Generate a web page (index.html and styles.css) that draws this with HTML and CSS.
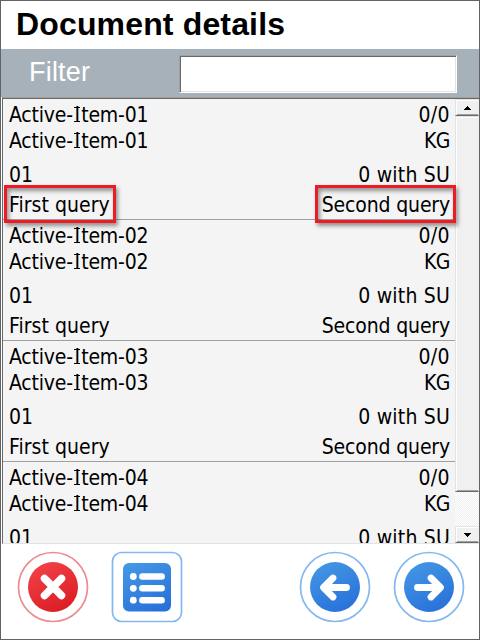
FILE: index.html
```html
<!DOCTYPE html>
<html lang="en">
<head>
<meta charset="utf-8">
<title>Document details</title>
<link rel="stylesheet" href="styles.css">
</head>
<body>
<main class="window">
  <h1 class="title">Document details</h1>
  <div class="filter">
    <label class="filter-label" for="filter">Filter</label>
    <input class="filter-input" id="filter" type="text">
  </div>
  <section class="list">
    <div class="rows">
      <article class="item">
        <div class="line"><span class="name">Active-<span class="cap-i">I</span>tem-01</span><span class="count">0/0</span></div>
        <div class="line"><span class="name">Active-<span class="cap-i">I</span>tem-01</span><span class="unit">KG</span></div>
        <div class="line stock"><span class="num">01</span><span class="su">0 with SU</span></div>
        <div class="line query"><span class="first marked">First query</span><span class="second marked">Second query</span></div>
      </article>
      <article class="item">
        <div class="line"><span class="name">Active-<span class="cap-i">I</span>tem-02</span><span class="count">0/0</span></div>
        <div class="line"><span class="name">Active-<span class="cap-i">I</span>tem-02</span><span class="unit">KG</span></div>
        <div class="line stock"><span class="num">01</span><span class="su">0 with SU</span></div>
        <div class="line query"><span class="first">First query</span><span class="second">Second query</span></div>
      </article>
      <article class="item">
        <div class="line"><span class="name">Active-<span class="cap-i">I</span>tem-03</span><span class="count">0/0</span></div>
        <div class="line"><span class="name">Active-<span class="cap-i">I</span>tem-03</span><span class="unit">KG</span></div>
        <div class="line stock"><span class="num">01</span><span class="su">0 with SU</span></div>
        <div class="line query"><span class="first">First query</span><span class="second">Second query</span></div>
      </article>
      <article class="item">
        <div class="line"><span class="name">Active-<span class="cap-i">I</span>tem-04</span><span class="count">0/0</span></div>
        <div class="line"><span class="name">Active-<span class="cap-i">I</span>tem-04</span><span class="unit">KG</span></div>
        <div class="line stock"><span class="num">01</span><span class="su">0 with SU</span></div>
      </article>
    </div>
    <div class="scrollbar">
      <div class="key"><svg width="7" height="4" viewBox="0 0 7 4" shape-rendering="crispEdges"><path d="M3 0h1v1h1v1h1v1h1v1H0V3h1V2h1V1h1z"/></svg></div>
      <div class="thumb"></div>
      <div class="track"></div>
      <div class="key"><svg width="7" height="4" viewBox="0 0 7 4" shape-rendering="crispEdges"><path d="M0 0h7v1H6v1H5v1H4v1H3V3H2V2H1V1H0z"/></svg></div>
    </div>
  </section>
  <footer class="actions">
    <svg class="action cancel" viewBox="0 0 72 72">
      <defs><linearGradient id="red" x1="0.2" y1="0" x2="0.7" y2="1"><stop offset="0" stop-color="#f04349"/><stop offset="1" stop-color="#dd1c23"/></linearGradient></defs>
      <circle class="ring red" cx="36" cy="36" r="34.5"/>
      <circle cx="36" cy="36" r="25" fill="url(#red)"/>
      <path class="stroke cross" d="M27.5 27.5l17 17M44.5 27.5l-17 17"/>
    </svg>
    <svg class="action menu" viewBox="0 0 72 72">
      <defs><linearGradient id="blue" x1="0.2" y1="0" x2="0.7" y2="1"><stop offset="0" stop-color="#4397e5"/><stop offset="1" stop-color="#2871d9"/></linearGradient></defs>
      <rect class="ring" x="1.5" y="1.5" width="69" height="69" rx="9"/>
      <rect x="12" y="12" width="48" height="48.5" rx="6" fill="url(#blue)"/>
      <path class="stroke bars" d="M31.3 25.5H50.7M31.3 37.3H50.7M31.3 49.2H50.7"/>
      <g fill="#fff"><circle cx="22.3" cy="25.5" r="3.4"/><circle cx="22.3" cy="37.3" r="3.4"/><circle cx="22.3" cy="49.2" r="3.4"/></g>
    </svg>
    <svg class="action back" viewBox="0 0 72 72">
      <circle class="ring" cx="36" cy="36" r="34.5"/>
      <circle cx="36" cy="36" r="25" fill="url(#blue)"/>
      <path class="stroke arrow" d="M47.5 36.5H25M34 27l-9.5 9.5L34 46"/>
    </svg>
    <svg class="action next" viewBox="0 0 72 72">
      <circle class="ring" cx="36" cy="36" r="34.5"/>
      <circle cx="36" cy="36" r="25" fill="url(#blue)"/>
      <path class="stroke arrow" d="M24.5 36.5H47M38 27l9.5 9.5L38 46"/>
    </svg>
  </footer>
</main>
</body>
</html>
```
FILE: styles.css
```css
*, *::after { box-sizing: border-box; }

body { margin: 0; }

.window {
  display: flex;
  flex-direction: column;
  width: 480px;
  height: 640px;
  overflow: hidden;
  border: 1px solid #656263;
  background: #fff;
}

.title {
  flex: none;
  height: 48px;
  margin: 0;
  padding-left: 15px;
  font: bold 32px/46px "Liberation Sans", Arial, sans-serif;
  letter-spacing: 0.15px;
  color: #000;
}

.filter {
  display: flex;
  flex: none;
  align-items: flex-start;
  justify-content: space-between;
  height: 48px;
  padding: 6px 22px 0 28px;
  background: #a7b1ba;
}

.filter-label {
  font: 27px/35px "Liberation Sans", Arial, sans-serif;
  letter-spacing: 0.2px;
  color: #fff;
}

.filter-input {
  width: 278px;
  height: 38px;
  padding: 0 6px;
  border: 1px solid;
  border-color: #a0a0a0 #fff #fff #a0a0a0;
  outline: 0;
  box-shadow: inset 1px 1px #696969, inset -1px -1px #e3e3e3;
  font: 20px "Liberation Sans", Arial, sans-serif;
}

.list {
  display: flex;
  flex: none;
  height: 447px;
  margin-left: 1px;
  overflow: hidden;
  border-top: 1px solid #a0a0a0;
  border-left: 1px solid #696969;
  border-bottom: 1px solid #e3e3e3;
  background: #f4f4f4;
  box-shadow: inset 0 1px #696969;
}

.rows {
  flex: none;
  width: 452px;
  padding-top: 1px;
  font: 21px/26px "DejaVu Sans Condensed", "DejaVu Sans", Tahoma, sans-serif;
  color: #000;
}

.item {
  height: 121px;
  padding: 3px 5px 0 6px;
  border-bottom: 1px solid #a0a0a0;
}

.line {
  display: flex;
  justify-content: space-between;
  height: 26px;
  white-space: nowrap;
}

.stock { margin-top: 8px; }
.query { margin-top: 4px; }

.name { letter-spacing: -0.2px; }
.count { letter-spacing: 0.4px; }
.unit { letter-spacing: -0.5px; }
.su { letter-spacing: 0.2px; }
.first { letter-spacing: 0.05px; }
.second { letter-spacing: -0.15px; }

/* capital I with its serifs */
.cap-i {
  padding: 0 1.4px 0 1.6px;
  background:
    linear-gradient(#000, #000) 50% 4px / 6px 1px no-repeat,
    linear-gradient(#000, #000) 50% 18px / 6px 1px no-repeat;
}

.marked { position: relative; }

.marked::after {
  content: "";
  position: absolute;
  top: -7px;
  left: -5px;
  right: -6px;
  height: 38px;
  border: 3px solid #ed1c24;
  box-shadow: 2px 3px 4px rgba(0, 0, 0, .4), inset 2px 3px 4px rgba(0, 0, 0, .4);
}

.second.marked::after { left: -7px; }

.scrollbar {
  display: flex;
  flex: 1;
  flex-direction: column;
  padding-top: 1px;
}

.key, .thumb {
  flex: none;
  border: 1px solid;
  border-color: #e3e3e3 #f0f0f0 #696969 #e3e3e3;
  box-shadow: inset 1px 1px #fff, inset 0 -1px #a0a0a0;
  background: #f0f0f0;
}

.key {
  display: flex;
  align-items: center;
  justify-content: center;
  height: 17px;
}

.thumb { height: 376px; }

.track {
  flex: 1;
  background: repeating-conic-gradient(#fff 0 25%, #f0f0f0 0 50%) 0 0 / 2px 2px;
}

.actions {
  display: flex;
  padding: 7px 0 0 16px;
}

.action {
  flex: none;
  width: 72px;
  height: 72px;
}

.menu { margin-left: 22px; }
.back { margin-left: 116px; }
.next { margin-left: 22px; }

.ring { fill: #fff; stroke: #83b9ee; stroke-width: 1.7; }
.ring.red { stroke: #ee8b90; }

.stroke {
  fill: none;
  stroke: #fff;
  stroke-linecap: round;
  stroke-linejoin: round;
}

.cross { stroke-width: 7.5; }
.bars { stroke-width: 6.4; }
.arrow { stroke-width: 6.8; }
```
